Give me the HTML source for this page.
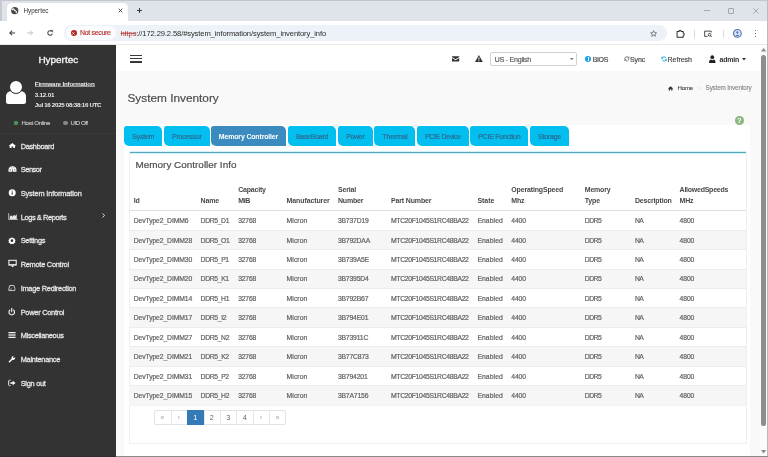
<!DOCTYPE html><html><head><meta charset="utf-8"><style>*{box-sizing:border-box;margin:0;padding:0}
html,body{width:768px;height:457px;overflow:hidden;background:#dfe3ea;font-family:"Liberation Sans",sans-serif;position:relative}
#W{position:absolute;left:0;top:0;width:768px;height:457px;will-change:transform}
.a{position:absolute}
.t{position:absolute;white-space:nowrap;line-height:1}
svg{position:absolute;overflow:visible}
#tabstrip{left:0;top:0;width:768px;height:21px;background:#dfe3ea;border-top:1.6px solid #c3c6cb}
#acttab{left:7px;top:3px;width:121px;height:18px;background:#fff;border-radius:5px 5px 0 0}
.flare{width:5px;height:5px;background:radial-gradient(circle at 0 0,transparent 4.6px,#fff 5px)}
.flare.r{background:radial-gradient(circle at 100% 0,transparent 4.6px,#fff 5px)}
#toolbar{left:0;top:20.8px;width:768px;height:24.2px;background:#fff;border-bottom:1px solid #e8e8e8}
#omni{left:64px;top:24.6px;width:603px;height:16.8px;border-radius:9px;background:#edf1f8}
#chip{left:66px;top:25.5px;width:50px;height:14px;border-radius:7px;background:#fbfcfe}
#side{left:0;top:45px;width:116px;height:412px;background:#333333}
#main{left:116px;top:45px;width:644px;height:412px;background:#f9f9f9}
#hdr{left:116px;top:45px;width:644px;height:26px;background:#fff}
#card{left:123.8px;top:125px;width:626px;height:332px;background:#fff}
.tab{position:absolute;top:125.5px;height:20.5px;background:#02bfef;border-radius:2.5px 5px 0 5px;color:#2a6f95;line-height:21.7px;text-align:center;white-space:nowrap}
.tab.act{background:#3a8cc0;color:#fff;font-weight:bold}
#uline{left:129.5px;top:151.7px;width:616.5px;height:1.3px;background:#56a8bb;box-shadow:0 0 1px 0.4px #a8e6f2}
#panel{left:128.6px;top:152px;width:618px;height:291.6px;border:1px solid #efefef;border-top:none}
.row{position:absolute;left:128.5px;width:617px;height:19.43px;border-top:1px solid #ececec}
.row.s{background:#f6f6f6}
.pg{position:absolute;top:409.5px;height:16px;border:1px solid #ddd;background:#fff;color:#337ab7;font-size:6px;line-height:14px;text-align:center}
.pg.act{background:#337ab7;border-color:#337ab7;color:#fff}
#sb{left:760px;top:45px;width:7px;height:412px;background:#fbfbfb}
#thumb{left:760.9px;top:55px;width:5.2px;height:371px;background:#8e8e8e;border-radius:2.6px}
</style></head><body><div id="W">
<div id="tabstrip" class="a"></div>
<div id="acttab" class="a"></div>
<div class="a" style="left:0;top:0;width:1.5px;height:45px;background:#c6c9ce"></div>
<svg style="left:11.4px;top:6.9px" width="7.5" height="7.3" viewBox="0 0 7.5 7.3"><circle cx="3.75" cy="3.65" r="3.6" fill="#464646"/><path d="M1.3 2.6Q2.2 1.3 3 2.4Q3.5 3.4 4.6 3.8Q5.5 4.2 5.3 5.6" stroke="#fff" stroke-width="1.15" fill="none" stroke-linecap="round"/></svg>
<div class="t" style="left:23.50px;top:8.00px;font-size:6.3px;color:#333;letter-spacing:-0.026px;">Hypertec</div>
<svg style="left:117.6px;top:8px" width="5" height="5" viewBox="0 0 10 10"><path d="M1.5 1.5L8.5 8.5M8.5 1.5L1.5 8.5" stroke="#333" stroke-width="1.8"/></svg>
<div class="a" style="left:136.8px;top:10px;width:5.2px;height:0.95px;background:#3c3c3c"></div><div class="a" style="left:138.95px;top:7.9px;width:0.95px;height:5.2px;background:#3c3c3c"></div>
<div class="a" style="left:704px;top:10.4px;width:6px;height:0.7px;background:#a3a6ab"></div>
<div class="a" style="left:728.3px;top:8.1px;width:5.6px;height:5.6px;border:0.8px solid #a3a6ab;border-radius:1px"></div>
<svg style="left:752.5px;top:8.1px" width="5.8" height="5.8" viewBox="0 0 10 10"><path d="M0.5 0.5L9.5 9.5M9.5 0.5L0.5 9.5" stroke="#8a8d92" stroke-width="1.2"/></svg>
<div id="toolbar" class="a"></div>
<svg style="left:9px;top:30.2px" width="6.4" height="5.8" viewBox="0 0 12 11"><path d="M11.5 5.5H1.5M6 1L1.5 5.5L6 10" stroke="#3c3c3c" stroke-width="1.9" fill="none"/></svg>
<svg style="left:27.4px;top:30.2px" width="6.4" height="5.8" viewBox="0 0 12 11"><path d="M0.5 5.5H10.5M6 1L10.5 5.5L6 10" stroke="#b8b8b8" stroke-width="1.7" fill="none"/></svg>
<svg style="left:47px;top:30px" width="6.2" height="6.2" viewBox="0 0 12 12"><path d="M10.3 6.8A4.4 4.4 0 1 1 8.8 2.4" stroke="#474747" stroke-width="2.1" fill="none"/><path d="M7 0.5H11V4.5Z" fill="#474747" stroke="#474747" stroke-width="0.8"/></svg>
<div id="omni" class="a"></div>
<div id="chip" class="a"></div>
<div class="a" style="left:70.6px;top:30.2px;width:6.2px;height:6.2px;border-radius:50%;background:#b3261e"></div>
<svg style="left:72.3px;top:31.9px" width="2.8" height="2.8" viewBox="0 0 10 10"><path d="M1 1L9 9M9 1L1 9" stroke="#fff" stroke-width="2.6"/></svg>
<div class="t" style="left:80.00px;top:29.00px;font-size:7.0px;color:#b3261e;letter-spacing:-0.315px;-webkit-text-stroke-width:0.1px;">Not secure</div>
<div class="t" style="left:120.5px;top:29.67px;font-size:7.6px;letter-spacing:-0.118px;color:#2a2a2a"><span style="color:#b0403a;text-decoration:line-through;text-decoration-thickness:0.5px;text-decoration-color:rgba(179,38,30,0.6)">https</span>://172.29.2.58/#system_information/system_inventory_info</div>
<svg style="left:649.8px;top:29.8px" width="7.2" height="7.2" viewBox="0 0 24 24"><path d="M12 2.5l2.9 6.3 6.9.7-5.2 4.6 1.5 6.8L12 17.4l-6.1 3.5 1.5-6.8L2.2 9.5l6.9-.7z" fill="none" stroke="#474747" stroke-width="2.2" stroke-linejoin="round"/></svg>
<svg style="left:675.6px;top:28.8px" width="9.6" height="9.2" viewBox="0 0 22 21"><path d="M2.5 5.5H7A2.4 2.4 0 0 1 11.8 5.5H16.5V9.8A2.4 2.4 0 0 1 16.5 14.6V19H2.5Z" fill="none" stroke="#2a2a2a" stroke-width="2.3" stroke-linejoin="round"/></svg>
<div class="a" style="left:694.3px;top:29.5px;width:0.7px;height:8px;background:#dadada"></div>
<svg style="left:703.8px;top:29.8px" width="8.5" height="7.5" viewBox="0 0 26 22"><path d="M2 3h20v4M2 3v16h9" fill="none" stroke="#1f1f1f" stroke-width="2.4"/><circle cx="17" cy="14" r="4" fill="none" stroke="#1f1f1f" stroke-width="2.4"/><path d="M20 17l4 4" stroke="#1f1f1f" stroke-width="2.4"/></svg>
<div class="a" style="left:722.5px;top:29.5px;width:0.7px;height:8px;background:#dadada"></div>
<svg style="left:732.5px;top:28.8px" width="8.8" height="8.8" viewBox="0 0 8.8 8.8"><circle cx="4.4" cy="4.4" r="3.85" fill="#dbe6fa" stroke="#4e6fa6" stroke-width="1.1"/><circle cx="4.4" cy="3.5" r="1.15" fill="#4a70b5"/><path d="M2.5 6.9Q4.4 4.6 6.3 6.9Z" fill="#4a70b5"/></svg>
<div class="a" style="left:754.9px;top:29.60px;width:1.6px;height:1.6px;border-radius:50%;background:#474747"></div>
<div class="a" style="left:754.9px;top:32.60px;width:1.6px;height:1.6px;border-radius:50%;background:#474747"></div>
<div class="a" style="left:754.9px;top:35.60px;width:1.6px;height:1.6px;border-radius:50%;background:#474747"></div>
<div id="side" class="a"></div>
<div class="t" style="left:38.40px;top:55.00px;font-size:9.95px;color:#f4f4f4;letter-spacing:-0.002px;-webkit-text-stroke-width:0.35px;">Hypertec</div>
<div class="a" style="left:5.5px;top:91.4px;width:20.3px;height:12.6px;border-radius:6px 6px 2.2px 2.2px / 5px 5px 2px 2px;background:#fff"></div>
<div class="a" style="left:10.05px;top:81.4px;width:11.9px;height:11.9px;border-radius:50%;background:#fff;box-shadow:0 0 0 0.9px #333"></div>
<div class="t" style="left:34.80px;top:81.00px;font-size:6.2px;color:#ececec;font-weight:bold;letter-spacing:-0.179px;">Firmware Information</div>
<div class="a" style="left:34.8px;top:86px;width:59.8px;height:0.7px;background:rgba(255,255,255,0.5)"></div>
<div class="t" style="left:34.80px;top:92.00px;font-size:6.2px;color:#ececec;font-weight:bold;letter-spacing:-0.184px;">3.12.01</div>
<div class="t" style="left:34.80px;top:102.00px;font-size:6.2px;color:#ececec;font-weight:bold;letter-spacing:-0.312px;">Jul 16 2025 08:38:16 UTC</div>
<div class="a" style="left:13.6px;top:120.5px;width:4.6px;height:4.6px;border-radius:50%;background:#52905a;box-shadow:0 0 0.6px 0.3px #3f6f45"></div>
<div class="t" style="left:21.50px;top:120.00px;font-size:6.2px;color:#c8c8c8;letter-spacing:-0.345px;-webkit-text-stroke-width:0.15px;">Host Online</div>
<div class="a" style="left:63.1px;top:120.5px;width:4.6px;height:4.6px;border-radius:50%;background:#888"></div>
<div class="t" style="left:70.60px;top:120.00px;font-size:6.2px;color:#c8c8c8;letter-spacing:-0.508px;-webkit-text-stroke-width:0.15px;">UID Off</div>
<div class="a" style="left:0;top:132.5px;width:116px;height:1px;background:#3a3a3a"></div>
<div class="t" style="left:20.70px;top:143.00px;font-size:7.4px;color:#e8e8e8;letter-spacing:-0.322px;-webkit-text-stroke-width:0.26px;">Dashboard</div>
<svg style="left:7.5px;top:141.80px" width="9" height="8" viewBox="0 0 18 16"><path d="M8.7 2.2L16 8H14V12.2H10.4V9.2H7V12.2H3.4V8H1.4Z" fill="#fff"/></svg>
<div class="t" style="left:20.70px;top:166.00px;font-size:7.4px;color:#e8e8e8;letter-spacing:-0.425px;-webkit-text-stroke-width:0.26px;">Sensor</div>
<svg style="left:7.5px;top:165.49px" width="9" height="8" viewBox="0 0 18 16"><path d="M1 13.3V10A8 7.6 0 0 1 17 10V13.3Z" fill="#fff"/><circle cx="4.3" cy="9.6" r="1.2" fill="#333"/><circle cx="13.7" cy="9.6" r="1.2" fill="#333"/><circle cx="6.2" cy="5.6" r="1" fill="#555"/><circle cx="11.8" cy="5.6" r="1" fill="#555"/><path d="M8 13.3L9 5.5L10 13.3Z" fill="#444"/></svg>
<div class="t" style="left:20.70px;top:190.00px;font-size:7.4px;color:#e8e8e8;letter-spacing:-0.153px;-webkit-text-stroke-width:0.26px;">System Information</div>
<svg style="left:7.5px;top:189.18px" width="9" height="8" viewBox="0 0 18 16"><circle cx="8.4" cy="7.3" r="7" fill="#fff"/><rect x="7.4" y="6.4" width="2" height="5" fill="#333"/><circle cx="8.4" cy="4.2" r="1.15" fill="#333"/></svg>
<div class="t" style="left:20.70px;top:214.00px;font-size:7.4px;color:#e8e8e8;letter-spacing:-0.379px;-webkit-text-stroke-width:0.26px;">Logs &amp; Reports</div>
<svg style="left:7.5px;top:212.87px" width="9" height="8" viewBox="0 0 18 16"><path d="M0.8 0.6H2.3V11.9H19.6V13.4H0.8Z" fill="#e8e4ea"/><path d="M3.6 11.9V7L6.5 4.5L9 7.5L12 3.5L14.5 6L17.5 2V11.9Z" fill="#e8e4ea"/></svg>
<div class="t" style="left:20.70px;top:237.00px;font-size:7.4px;color:#e8e8e8;letter-spacing:-0.280px;-webkit-text-stroke-width:0.26px;">Settings</div>
<svg style="left:7.5px;top:236.56px" width="9" height="8" viewBox="0 0 18 16"><path d="M7.9 0.2L9.6 2.4L12.4 1.9L12.9 4.7L15.3 6.2L13.9 8.7L14.8 11.4L12 12.1L10.9 14.6L7.9 13.4L4.9 14.6L3.8 12.1L1 11.4L1.9 8.7L0.5 6.2L2.9 4.7L3.4 1.9L6.2 2.4Z" fill="#fff"/><circle cx="7.9" cy="7.3" r="2.6" fill="#333"/></svg>
<div class="t" style="left:20.70px;top:261.00px;font-size:7.4px;color:#e8e8e8;letter-spacing:-0.259px;-webkit-text-stroke-width:0.26px;">Remote Control</div>
<svg style="left:7.5px;top:260.25px" width="9" height="8" viewBox="0 0 18 16"><path d="M0.8 -0.4H17.4V11.2H0.8Z" fill="#fff"/><path d="M2.8 1.6H15.4V8.4H2.8Z" fill="#333"/><path d="M5.6 11H12.6L9.1 14.6Z" fill="#fff"/></svg>
<div class="t" style="left:20.70px;top:285.00px;font-size:7.4px;color:#e8e8e8;letter-spacing:-0.262px;-webkit-text-stroke-width:0.26px;">Image Redirection</div>
<svg style="left:7.5px;top:283.94px" width="9" height="8" viewBox="0 0 18 16"><path d="M3.6 2.9H11.8L13.7 9V13.1H1.7V9Z" fill="none" stroke="#d6d6d6" stroke-width="1.8" stroke-linejoin="round"/><path d="M4.6 5H10.8V7.2H4.6Z" fill="#444"/><path d="M3.5 10.2H8" stroke="#d6d6d6" stroke-width="1.2"/></svg>
<div class="t" style="left:20.70px;top:309.00px;font-size:7.4px;color:#e8e8e8;letter-spacing:-0.253px;-webkit-text-stroke-width:0.26px;">Power Control</div>
<svg style="left:7.5px;top:307.63px" width="9" height="8" viewBox="0 0 18 16"><path d="M4.4 3.6A5.6 5.6 0 1 0 10.6 3.6" fill="none" stroke="#f2f2f2" stroke-width="2.2"/><path d="M7.5 0.8V7.6" stroke="#f2f2f2" stroke-width="2.2" stroke-linecap="round"/></svg>
<div class="t" style="left:20.70px;top:332.00px;font-size:7.4px;color:#e8e8e8;letter-spacing:-0.299px;-webkit-text-stroke-width:0.26px;">Miscellaneous</div>
<svg style="left:7.5px;top:331.32px" width="9" height="8" viewBox="0 0 18 16"><rect x="0.8" y="2" width="14.4" height="2.6" fill="#eee"/><rect x="0.8" y="6.7" width="14.4" height="2.6" fill="#eee"/><rect x="0.8" y="11.4" width="14.4" height="2.6" fill="#eee"/></svg>
<div class="t" style="left:20.70px;top:356.00px;font-size:7.4px;color:#e8e8e8;letter-spacing:-0.261px;-webkit-text-stroke-width:0.26px;">Maintenance</div>
<svg style="left:7.5px;top:355.01px" width="9" height="8" viewBox="0 0 18 16"><path d="M2.8 13.6L8.6 7.8" stroke="#fff" stroke-width="2.8" stroke-linecap="round"/><path d="M7.2 7.6A4.2 4.2 0 0 1 11.6 2L9.8 4.6L11.6 6.2L14.4 4.6A4.2 4.2 0 0 1 9.2 9.6Z" fill="#fff"/></svg>
<div class="t" style="left:20.70px;top:380.00px;font-size:7.4px;color:#e8e8e8;letter-spacing:-0.269px;-webkit-text-stroke-width:0.26px;">Sign out</div>
<svg style="left:7.5px;top:378.70px" width="9" height="8" viewBox="0 0 18 16"><path d="M5 2.6H2.8Q1.2 2.6 1.2 4.2V11.6Q1.2 13.2 2.8 13.2H5" fill="none" stroke="#e6e6e6" stroke-width="2"/><path d="M4.6 6.4H9.4V3.4L15 8L9.4 12.6V9.6H4.6Z" fill="#fff"/>
</svg>
<svg style="left:102.2px;top:212.6px" width="3.2" height="4.9" viewBox="0 0 6 10"><path d="M1.2 1L4.8 5L1.2 9" stroke="#e0e0e0" stroke-width="2" fill="none"/></svg>
<div id="main" class="a"></div>
<div id="hdr" class="a"></div>
<div class="a" style="left:129.8px;top:55.00px;width:12px;height:1.3px;background:#3a3a3a"></div>
<div class="a" style="left:129.8px;top:58.15px;width:12px;height:1.3px;background:#3a3a3a"></div>
<div class="a" style="left:129.8px;top:61.45px;width:12px;height:1.3px;background:#3a3a3a"></div>
<svg style="left:452px;top:56px" width="7.2" height="5.8" viewBox="0 0 16 12"><path d="M0 0H16V2L8 7L0 2Z" fill="#333"/><path d="M0 4L8 9L16 4V12H0Z" fill="#333"/></svg>
<svg style="left:474.8px;top:55px" width="7.8" height="7" viewBox="0 0 16 14"><path d="M8 0L16 14H0Z" fill="#333"/><path d="M6.8 4.8H9.2L8.8 9.6H7.2Z M7 10.6H9V12.4H7Z" fill="#fff"/></svg>
<div class="a" style="left:490.4px;top:51.6px;width:86.8px;height:14.3px;border:1px solid #d2d2d2;border-radius:2px;background:#fff"></div>
<div class="t" style="left:494.80px;top:56.00px;font-size:7.0px;color:#555;letter-spacing:-0.225px;-webkit-text-stroke-width:0.15px;">US - English</div>
<svg style="left:569.5px;top:57.8px" width="3.6" height="2.2" viewBox="0 0 6 3.6"><path d="M0 0H6L3 3.6Z" fill="#777"/></svg>
<div class="a" style="left:585.4px;top:55.9px;width:6px;height:6px;border-radius:50%;background:#1ba1e2"></div>
<div class="a" style="left:587.95px;top:58.3px;width:0.9px;height:2.4px;background:#fff"></div><div class="a" style="left:587.95px;top:56.9px;width:0.9px;height:0.9px;background:#fff"></div>
<div class="t" style="left:592.70px;top:56.00px;font-size:7.0px;color:#444;letter-spacing:-0.357px;-webkit-text-stroke-width:0.15px;">BIOS</div>
<svg style="left:623.6px;top:55.9px" width="5.6" height="5.6" viewBox="0 0 12 12"><path d="M1.6 6.5A4.4 4.4 0 0 1 9.4 3.2" stroke="#666" stroke-width="1.8" fill="none"/><path d="M10.4 5.5A4.4 4.4 0 0 1 2.6 8.8" stroke="#666" stroke-width="1.8" fill="none"/><path d="M11.2 0.6V5H6.8Z" fill="#666"/><path d="M0.8 11.4V7H5.2Z" fill="#666"/></svg>
<div class="t" style="left:630.00px;top:56.00px;font-size:7.0px;color:#444;letter-spacing:-0.141px;-webkit-text-stroke-width:0.15px;">Sync</div>
<svg style="left:660.8px;top:55.7px" width="6.2" height="5.9" viewBox="0 0 12 12"><path d="M10 4.6A4.6 4.6 0 0 0 2 3.6" stroke="#2aa6d8" stroke-width="2" fill="none"/><path d="M2 7.4A4.6 4.6 0 0 0 10 8.4" stroke="#2aa6d8" stroke-width="2" fill="none"/><path d="M0.4 0.6V5.4H5Z" fill="#2aa6d8"/><path d="M11.6 11.4V6.6H7Z" fill="#2aa6d8"/></svg>
<div class="t" style="left:667.50px;top:56.00px;font-size:7.0px;color:#444;letter-spacing:-0.002px;-webkit-text-stroke-width:0.15px;">Refresh</div>
<svg style="left:708.5px;top:54.8px" width="6.6" height="8.2" viewBox="0 0 12 14"><circle cx="6" cy="3.6" r="3.4" fill="#222"/><path d="M0 14C0 9 2 7.6 3.6 7.6L6 9L8.4 7.6C10 7.6 12 9 12 14Z" fill="#222"/></svg>
<div class="t" style="left:719.50px;top:56.00px;font-size:7.0px;color:#333;font-weight:bold;letter-spacing:-0.223px;">admin</div>
<svg style="left:742.2px;top:58.2px" width="4" height="2.4" viewBox="0 0 6 3.6"><path d="M0 0H6L3 3.6Z" fill="#333"/></svg>
<div class="t" style="left:127.50px;top:93.00px;font-size:11.8px;color:#4d4d4d;letter-spacing:0.006px;-webkit-text-stroke-width:0.2px;">System Inventory</div>
<svg style="left:668px;top:85.6px" width="5.2" height="4.6" viewBox="0 0 12 10"><path d="M6 0L12 5.2H10.4V10H7.4V7H4.6V10H1.6V5.2H0Z" fill="#333"/></svg>
<div class="t" style="left:677.60px;top:85.00px;font-size:6.2px;color:#444;letter-spacing:-0.285px;-webkit-text-stroke-width:0.1px;">Home</div>
<div class="t" style="left:697.60px;top:86.00px;font-size:5.5px;color:#dadada;">&gt;</div>
<div class="t" style="left:705.60px;top:85.00px;font-size:6.3px;color:#858585;letter-spacing:-0.167px;-webkit-text-stroke-width:0.1px;">System Inventory</div>
<div class="a" style="left:735.1px;top:116.3px;width:8.6px;height:8.6px;border-radius:50%;background:#8cb981"></div>
<div class="t" style="left:737.2px;top:117.2px;font-size:7px;color:#fff;font-weight:bold">?</div>
<div id="card" class="a"></div>
<div class="tab" style="left:124.2px;width:38.00px"></div>
<div class="t" style="left:132.25px;top:133.00px;font-size:7.0px;color:#2b6c93;letter-spacing:-0.240px;-webkit-text-stroke-width:0.2px;">System</div>
<div class="tab" style="left:164px;width:45.70px"></div>
<div class="t" style="left:172.05px;top:133.00px;font-size:7.0px;color:#2b6c93;letter-spacing:-0.212px;-webkit-text-stroke-width:0.2px;">Processor</div>
<div class="tab act" style="left:210.9px;width:75.10px"></div>
<div class="t" style="left:218.80px;top:133.00px;font-size:7.0px;color:#ffffff;font-weight:bold;letter-spacing:-0.172px;">Memory Controller</div>
<div class="tab" style="left:287.7px;width:48.55px"></div>
<div class="t" style="left:295.88px;top:133.00px;font-size:7.0px;color:#2b6c93;letter-spacing:-0.271px;-webkit-text-stroke-width:0.2px;">BaseBoard</div>
<div class="tab" style="left:337.9px;width:34.80px"></div>
<div class="t" style="left:346.20px;top:133.00px;font-size:7.0px;color:#2b6c93;letter-spacing:-0.328px;-webkit-text-stroke-width:0.2px;">Power</div>
<div class="tab" style="left:374.2px;width:41.20px"></div>
<div class="t" style="left:382.20px;top:133.00px;font-size:7.0px;color:#2b6c93;letter-spacing:-0.068px;-webkit-text-stroke-width:0.2px;">Thermal</div>
<div class="tab" style="left:417px;width:51.60px"></div>
<div class="t" style="left:424.90px;top:133.00px;font-size:7.0px;color:#2b6c93;letter-spacing:-0.353px;-webkit-text-stroke-width:0.2px;">PCIE Device</div>
<div class="tab" style="left:470.2px;width:58.10px"></div>
<div class="t" style="left:478.20px;top:133.00px;font-size:7.0px;color:#2b6c93;letter-spacing:-0.233px;-webkit-text-stroke-width:0.2px;">PCIE Function</div>
<div class="tab" style="left:530px;width:38.90px"></div>
<div class="t" style="left:538.00px;top:133.00px;font-size:7.0px;color:#2b6c93;letter-spacing:-0.231px;-webkit-text-stroke-width:0.2px;">Storage</div>
<div id="uline" class="a"></div>
<div id="panel" class="a"></div>
<div class="t" style="left:135.50px;top:160.00px;font-size:9.93px;color:#4e4e4e;letter-spacing:0.001px;-webkit-text-stroke-width:0.2px;">Memory Controller Info</div>
<div class="t" style="left:133.80px;top:197.00px;font-size:7.0px;color:#484848;font-weight:bold;letter-spacing:-0.261px;">Id</div>
<div class="t" style="left:200.60px;top:197.00px;font-size:7.0px;color:#484848;font-weight:bold;letter-spacing:-0.142px;">Name</div>
<div class="t" style="left:238.20px;top:186.00px;font-size:7.0px;color:#484848;font-weight:bold;letter-spacing:-0.210px;">Capacity</div>
<div class="t" style="left:238.20px;top:197.00px;font-size:7.0px;color:#484848;font-weight:bold;letter-spacing:-0.311px;">MiB</div>
<div class="t" style="left:286.60px;top:197.00px;font-size:7.0px;color:#484848;font-weight:bold;letter-spacing:-0.112px;">Manufacturer</div>
<div class="t" style="left:337.90px;top:186.00px;font-size:7.0px;color:#484848;font-weight:bold;letter-spacing:-0.145px;">Serial</div>
<div class="t" style="left:337.90px;top:197.00px;font-size:7.0px;color:#484848;font-weight:bold;letter-spacing:-0.158px;">Number</div>
<div class="t" style="left:391.00px;top:197.00px;font-size:7.0px;color:#484848;font-weight:bold;letter-spacing:-0.146px;">Part Number</div>
<div class="t" style="left:477.40px;top:197.00px;font-size:7.0px;color:#484848;font-weight:bold;letter-spacing:-0.023px;">State</div>
<div class="t" style="left:511.30px;top:186.00px;font-size:7.0px;color:#484848;font-weight:bold;letter-spacing:-0.162px;">OperatingSpeed</div>
<div class="t" style="left:511.30px;top:197.00px;font-size:7.0px;color:#484848;font-weight:bold;letter-spacing:-0.227px;">Mhz</div>
<div class="t" style="left:584.80px;top:186.00px;font-size:7.0px;color:#484848;font-weight:bold;letter-spacing:-0.207px;">Memory</div>
<div class="t" style="left:584.80px;top:197.00px;font-size:7.0px;color:#484848;font-weight:bold;letter-spacing:-0.198px;">Type</div>
<div class="t" style="left:634.90px;top:197.00px;font-size:7.0px;color:#484848;font-weight:bold;letter-spacing:-0.155px;">Description</div>
<div class="t" style="left:679.60px;top:186.00px;font-size:7.0px;color:#484848;font-weight:bold;letter-spacing:-0.249px;">AllowedSpeeds</div>
<div class="t" style="left:679.60px;top:197.00px;font-size:7.0px;color:#484848;font-weight:bold;letter-spacing:-0.240px;">MHz</div>
<div class="row" style="top:210.30px;border-top-color:#dedede"></div>
<div class="t" style="left:133.80px;top:218.00px;font-size:6.8px;color:#626262;letter-spacing:-0.121px;-webkit-text-stroke-width:0.2px;">DevType2_DIMM6</div>
<div class="t" style="left:200.60px;top:218.00px;font-size:6.8px;color:#626262;letter-spacing:-0.354px;-webkit-text-stroke-width:0.2px;">DDR5_D1</div>
<div class="t" style="left:238.20px;top:218.00px;font-size:6.8px;color:#626262;letter-spacing:-0.189px;-webkit-text-stroke-width:0.2px;">32768</div>
<div class="t" style="left:286.60px;top:218.00px;font-size:6.8px;color:#626262;letter-spacing:0.068px;-webkit-text-stroke-width:0.2px;">Micron</div>
<div class="t" style="left:337.90px;top:218.00px;font-size:6.8px;color:#626262;letter-spacing:-0.177px;-webkit-text-stroke-width:0.2px;">3B737D19</div>
<div class="t" style="left:391.00px;top:218.00px;font-size:6.8px;color:#626262;letter-spacing:-0.315px;-webkit-text-stroke-width:0.2px;">MTC20F1045S1RC48BA22</div>
<div class="t" style="left:477.40px;top:218.00px;font-size:6.8px;color:#626262;letter-spacing:0.071px;-webkit-text-stroke-width:0.2px;">Enabled</div>
<div class="t" style="left:511.30px;top:218.00px;font-size:6.8px;color:#626262;letter-spacing:-0.132px;-webkit-text-stroke-width:0.2px;">4400</div>
<div class="t" style="left:584.80px;top:218.00px;font-size:6.8px;color:#626262;letter-spacing:-0.528px;-webkit-text-stroke-width:0.2px;">DDR5</div>
<div class="t" style="left:634.90px;top:218.00px;font-size:6.8px;color:#626262;letter-spacing:-0.520px;-webkit-text-stroke-width:0.2px;">NA</div>
<div class="t" style="left:679.60px;top:218.00px;font-size:6.8px;color:#626262;letter-spacing:-0.132px;-webkit-text-stroke-width:0.2px;">4800</div>
<div class="row s" style="top:229.73px"></div>
<div class="t" style="left:133.80px;top:238.00px;font-size:6.8px;color:#626262;letter-spacing:-0.120px;-webkit-text-stroke-width:0.2px;">DevType2_DIMM28</div>
<div class="t" style="left:200.60px;top:238.00px;font-size:6.8px;color:#626262;letter-spacing:-0.358px;-webkit-text-stroke-width:0.2px;">DDR5_O1</div>
<div class="t" style="left:238.20px;top:238.00px;font-size:6.8px;color:#626262;letter-spacing:-0.189px;-webkit-text-stroke-width:0.2px;">32768</div>
<div class="t" style="left:286.60px;top:238.00px;font-size:6.8px;color:#626262;letter-spacing:0.068px;-webkit-text-stroke-width:0.2px;">Micron</div>
<div class="t" style="left:337.90px;top:238.00px;font-size:6.8px;color:#626262;letter-spacing:-0.185px;-webkit-text-stroke-width:0.2px;">3B792DAA</div>
<div class="t" style="left:391.00px;top:238.00px;font-size:6.8px;color:#626262;letter-spacing:-0.315px;-webkit-text-stroke-width:0.2px;">MTC20F1045S1RC48BA22</div>
<div class="t" style="left:477.40px;top:238.00px;font-size:6.8px;color:#626262;letter-spacing:0.071px;-webkit-text-stroke-width:0.2px;">Enabled</div>
<div class="t" style="left:511.30px;top:238.00px;font-size:6.8px;color:#626262;letter-spacing:-0.132px;-webkit-text-stroke-width:0.2px;">4400</div>
<div class="t" style="left:584.80px;top:238.00px;font-size:6.8px;color:#626262;letter-spacing:-0.528px;-webkit-text-stroke-width:0.2px;">DDR5</div>
<div class="t" style="left:634.90px;top:238.00px;font-size:6.8px;color:#626262;letter-spacing:-0.520px;-webkit-text-stroke-width:0.2px;">NA</div>
<div class="t" style="left:679.60px;top:238.00px;font-size:6.8px;color:#626262;letter-spacing:-0.132px;-webkit-text-stroke-width:0.2px;">4800</div>
<div class="row" style="top:249.16px"></div>
<div class="t" style="left:133.80px;top:257.00px;font-size:6.8px;color:#626262;letter-spacing:-0.120px;-webkit-text-stroke-width:0.2px;">DevType2_DIMM30</div>
<div class="t" style="left:200.60px;top:257.00px;font-size:6.8px;color:#626262;letter-spacing:-0.350px;-webkit-text-stroke-width:0.2px;">DDR5_P1</div>
<div class="t" style="left:238.20px;top:257.00px;font-size:6.8px;color:#626262;letter-spacing:-0.189px;-webkit-text-stroke-width:0.2px;">32768</div>
<div class="t" style="left:286.60px;top:257.00px;font-size:6.8px;color:#626262;letter-spacing:0.068px;-webkit-text-stroke-width:0.2px;">Micron</div>
<div class="t" style="left:337.90px;top:257.00px;font-size:6.8px;color:#626262;letter-spacing:-0.179px;-webkit-text-stroke-width:0.2px;">3B739A5E</div>
<div class="t" style="left:391.00px;top:257.00px;font-size:6.8px;color:#626262;letter-spacing:-0.315px;-webkit-text-stroke-width:0.2px;">MTC20F1045S1RC48BA22</div>
<div class="t" style="left:477.40px;top:257.00px;font-size:6.8px;color:#626262;letter-spacing:0.071px;-webkit-text-stroke-width:0.2px;">Enabled</div>
<div class="t" style="left:511.30px;top:257.00px;font-size:6.8px;color:#626262;letter-spacing:-0.132px;-webkit-text-stroke-width:0.2px;">4400</div>
<div class="t" style="left:584.80px;top:257.00px;font-size:6.8px;color:#626262;letter-spacing:-0.528px;-webkit-text-stroke-width:0.2px;">DDR5</div>
<div class="t" style="left:634.90px;top:257.00px;font-size:6.8px;color:#626262;letter-spacing:-0.520px;-webkit-text-stroke-width:0.2px;">NA</div>
<div class="t" style="left:679.60px;top:257.00px;font-size:6.8px;color:#626262;letter-spacing:-0.132px;-webkit-text-stroke-width:0.2px;">4800</div>
<div class="row s" style="top:268.59px"></div>
<div class="t" style="left:133.80px;top:276.00px;font-size:6.8px;color:#626262;letter-spacing:-0.120px;-webkit-text-stroke-width:0.2px;">DevType2_DIMM20</div>
<div class="t" style="left:200.60px;top:276.00px;font-size:6.8px;color:#626262;letter-spacing:-0.350px;-webkit-text-stroke-width:0.2px;">DDR5_K1</div>
<div class="t" style="left:238.20px;top:276.00px;font-size:6.8px;color:#626262;letter-spacing:-0.189px;-webkit-text-stroke-width:0.2px;">32768</div>
<div class="t" style="left:286.60px;top:276.00px;font-size:6.8px;color:#626262;letter-spacing:0.068px;-webkit-text-stroke-width:0.2px;">Micron</div>
<div class="t" style="left:337.90px;top:276.00px;font-size:6.8px;color:#626262;letter-spacing:-0.177px;-webkit-text-stroke-width:0.2px;">3B7395D4</div>
<div class="t" style="left:391.00px;top:276.00px;font-size:6.8px;color:#626262;letter-spacing:-0.315px;-webkit-text-stroke-width:0.2px;">MTC20F1045S1RC48BA22</div>
<div class="t" style="left:477.40px;top:276.00px;font-size:6.8px;color:#626262;letter-spacing:0.071px;-webkit-text-stroke-width:0.2px;">Enabled</div>
<div class="t" style="left:511.30px;top:276.00px;font-size:6.8px;color:#626262;letter-spacing:-0.132px;-webkit-text-stroke-width:0.2px;">4400</div>
<div class="t" style="left:584.80px;top:276.00px;font-size:6.8px;color:#626262;letter-spacing:-0.528px;-webkit-text-stroke-width:0.2px;">DDR5</div>
<div class="t" style="left:634.90px;top:276.00px;font-size:6.8px;color:#626262;letter-spacing:-0.520px;-webkit-text-stroke-width:0.2px;">NA</div>
<div class="t" style="left:679.60px;top:276.00px;font-size:6.8px;color:#626262;letter-spacing:-0.132px;-webkit-text-stroke-width:0.2px;">4800</div>
<div class="row" style="top:288.02px"></div>
<div class="t" style="left:133.80px;top:296.00px;font-size:6.8px;color:#626262;letter-spacing:-0.120px;-webkit-text-stroke-width:0.2px;">DevType2_DIMM14</div>
<div class="t" style="left:200.60px;top:296.00px;font-size:6.8px;color:#626262;letter-spacing:-0.354px;-webkit-text-stroke-width:0.2px;">DDR5_H1</div>
<div class="t" style="left:238.20px;top:296.00px;font-size:6.8px;color:#626262;letter-spacing:-0.189px;-webkit-text-stroke-width:0.2px;">32768</div>
<div class="t" style="left:286.60px;top:296.00px;font-size:6.8px;color:#626262;letter-spacing:0.068px;-webkit-text-stroke-width:0.2px;">Micron</div>
<div class="t" style="left:337.90px;top:296.00px;font-size:6.8px;color:#626262;letter-spacing:-0.175px;-webkit-text-stroke-width:0.2px;">3B792B67</div>
<div class="t" style="left:391.00px;top:296.00px;font-size:6.8px;color:#626262;letter-spacing:-0.315px;-webkit-text-stroke-width:0.2px;">MTC20F1045S1RC48BA22</div>
<div class="t" style="left:477.40px;top:296.00px;font-size:6.8px;color:#626262;letter-spacing:0.071px;-webkit-text-stroke-width:0.2px;">Enabled</div>
<div class="t" style="left:511.30px;top:296.00px;font-size:6.8px;color:#626262;letter-spacing:-0.132px;-webkit-text-stroke-width:0.2px;">4400</div>
<div class="t" style="left:584.80px;top:296.00px;font-size:6.8px;color:#626262;letter-spacing:-0.528px;-webkit-text-stroke-width:0.2px;">DDR5</div>
<div class="t" style="left:634.90px;top:296.00px;font-size:6.8px;color:#626262;letter-spacing:-0.520px;-webkit-text-stroke-width:0.2px;">NA</div>
<div class="t" style="left:679.60px;top:296.00px;font-size:6.8px;color:#626262;letter-spacing:-0.132px;-webkit-text-stroke-width:0.2px;">4800</div>
<div class="row s" style="top:307.45px"></div>
<div class="t" style="left:133.80px;top:315.00px;font-size:6.8px;color:#626262;letter-spacing:-0.120px;-webkit-text-stroke-width:0.2px;">DevType2_DIMM17</div>
<div class="t" style="left:200.60px;top:315.00px;font-size:6.8px;color:#626262;letter-spacing:-0.320px;-webkit-text-stroke-width:0.2px;">DDR5_I2</div>
<div class="t" style="left:238.20px;top:315.00px;font-size:6.8px;color:#626262;letter-spacing:-0.189px;-webkit-text-stroke-width:0.2px;">32768</div>
<div class="t" style="left:286.60px;top:315.00px;font-size:6.8px;color:#626262;letter-spacing:0.068px;-webkit-text-stroke-width:0.2px;">Micron</div>
<div class="t" style="left:337.90px;top:315.00px;font-size:6.8px;color:#626262;letter-spacing:-0.175px;-webkit-text-stroke-width:0.2px;">3B794E01</div>
<div class="t" style="left:391.00px;top:315.00px;font-size:6.8px;color:#626262;letter-spacing:-0.315px;-webkit-text-stroke-width:0.2px;">MTC20F1045S1RC48BA22</div>
<div class="t" style="left:477.40px;top:315.00px;font-size:6.8px;color:#626262;letter-spacing:0.071px;-webkit-text-stroke-width:0.2px;">Enabled</div>
<div class="t" style="left:511.30px;top:315.00px;font-size:6.8px;color:#626262;letter-spacing:-0.132px;-webkit-text-stroke-width:0.2px;">4400</div>
<div class="t" style="left:584.80px;top:315.00px;font-size:6.8px;color:#626262;letter-spacing:-0.528px;-webkit-text-stroke-width:0.2px;">DDR5</div>
<div class="t" style="left:634.90px;top:315.00px;font-size:6.8px;color:#626262;letter-spacing:-0.520px;-webkit-text-stroke-width:0.2px;">NA</div>
<div class="t" style="left:679.60px;top:315.00px;font-size:6.8px;color:#626262;letter-spacing:-0.132px;-webkit-text-stroke-width:0.2px;">4800</div>
<div class="row" style="top:326.88px"></div>
<div class="t" style="left:133.80px;top:335.00px;font-size:6.8px;color:#626262;letter-spacing:-0.120px;-webkit-text-stroke-width:0.2px;">DevType2_DIMM27</div>
<div class="t" style="left:200.60px;top:335.00px;font-size:6.8px;color:#626262;letter-spacing:-0.354px;-webkit-text-stroke-width:0.2px;">DDR5_N2</div>
<div class="t" style="left:238.20px;top:335.00px;font-size:6.8px;color:#626262;letter-spacing:-0.189px;-webkit-text-stroke-width:0.2px;">32768</div>
<div class="t" style="left:286.60px;top:335.00px;font-size:6.8px;color:#626262;letter-spacing:0.068px;-webkit-text-stroke-width:0.2px;">Micron</div>
<div class="t" style="left:337.90px;top:335.00px;font-size:6.8px;color:#626262;letter-spacing:-0.174px;-webkit-text-stroke-width:0.2px;">3B73911C</div>
<div class="t" style="left:391.00px;top:335.00px;font-size:6.8px;color:#626262;letter-spacing:-0.315px;-webkit-text-stroke-width:0.2px;">MTC20F1045S1RC48BA22</div>
<div class="t" style="left:477.40px;top:335.00px;font-size:6.8px;color:#626262;letter-spacing:0.071px;-webkit-text-stroke-width:0.2px;">Enabled</div>
<div class="t" style="left:511.30px;top:335.00px;font-size:6.8px;color:#626262;letter-spacing:-0.132px;-webkit-text-stroke-width:0.2px;">4400</div>
<div class="t" style="left:584.80px;top:335.00px;font-size:6.8px;color:#626262;letter-spacing:-0.528px;-webkit-text-stroke-width:0.2px;">DDR5</div>
<div class="t" style="left:634.90px;top:335.00px;font-size:6.8px;color:#626262;letter-spacing:-0.520px;-webkit-text-stroke-width:0.2px;">NA</div>
<div class="t" style="left:679.60px;top:335.00px;font-size:6.8px;color:#626262;letter-spacing:-0.132px;-webkit-text-stroke-width:0.2px;">4800</div>
<div class="row s" style="top:346.31px"></div>
<div class="t" style="left:133.80px;top:354.00px;font-size:6.8px;color:#626262;letter-spacing:-0.120px;-webkit-text-stroke-width:0.2px;">DevType2_DIMM21</div>
<div class="t" style="left:200.60px;top:354.00px;font-size:6.8px;color:#626262;letter-spacing:-0.350px;-webkit-text-stroke-width:0.2px;">DDR5_K2</div>
<div class="t" style="left:238.20px;top:354.00px;font-size:6.8px;color:#626262;letter-spacing:-0.189px;-webkit-text-stroke-width:0.2px;">32768</div>
<div class="t" style="left:286.60px;top:354.00px;font-size:6.8px;color:#626262;letter-spacing:0.068px;-webkit-text-stroke-width:0.2px;">Micron</div>
<div class="t" style="left:337.90px;top:354.00px;font-size:6.8px;color:#626262;letter-spacing:-0.177px;-webkit-text-stroke-width:0.2px;">3B77C873</div>
<div class="t" style="left:391.00px;top:354.00px;font-size:6.8px;color:#626262;letter-spacing:-0.315px;-webkit-text-stroke-width:0.2px;">MTC20F1045S1RC48BA22</div>
<div class="t" style="left:477.40px;top:354.00px;font-size:6.8px;color:#626262;letter-spacing:0.071px;-webkit-text-stroke-width:0.2px;">Enabled</div>
<div class="t" style="left:511.30px;top:354.00px;font-size:6.8px;color:#626262;letter-spacing:-0.132px;-webkit-text-stroke-width:0.2px;">4400</div>
<div class="t" style="left:584.80px;top:354.00px;font-size:6.8px;color:#626262;letter-spacing:-0.528px;-webkit-text-stroke-width:0.2px;">DDR5</div>
<div class="t" style="left:634.90px;top:354.00px;font-size:6.8px;color:#626262;letter-spacing:-0.520px;-webkit-text-stroke-width:0.2px;">NA</div>
<div class="t" style="left:679.60px;top:354.00px;font-size:6.8px;color:#626262;letter-spacing:-0.132px;-webkit-text-stroke-width:0.2px;">4800</div>
<div class="row" style="top:365.74px"></div>
<div class="t" style="left:133.80px;top:374.00px;font-size:6.8px;color:#626262;letter-spacing:-0.120px;-webkit-text-stroke-width:0.2px;">DevType2_DIMM31</div>
<div class="t" style="left:200.60px;top:374.00px;font-size:6.8px;color:#626262;letter-spacing:-0.350px;-webkit-text-stroke-width:0.2px;">DDR5_P2</div>
<div class="t" style="left:238.20px;top:374.00px;font-size:6.8px;color:#626262;letter-spacing:-0.189px;-webkit-text-stroke-width:0.2px;">32768</div>
<div class="t" style="left:286.60px;top:374.00px;font-size:6.8px;color:#626262;letter-spacing:0.068px;-webkit-text-stroke-width:0.2px;">Micron</div>
<div class="t" style="left:337.90px;top:374.00px;font-size:6.8px;color:#626262;letter-spacing:-0.171px;-webkit-text-stroke-width:0.2px;">3B794201</div>
<div class="t" style="left:391.00px;top:374.00px;font-size:6.8px;color:#626262;letter-spacing:-0.315px;-webkit-text-stroke-width:0.2px;">MTC20F1045S1RC48BA22</div>
<div class="t" style="left:477.40px;top:374.00px;font-size:6.8px;color:#626262;letter-spacing:0.071px;-webkit-text-stroke-width:0.2px;">Enabled</div>
<div class="t" style="left:511.30px;top:374.00px;font-size:6.8px;color:#626262;letter-spacing:-0.132px;-webkit-text-stroke-width:0.2px;">4400</div>
<div class="t" style="left:584.80px;top:374.00px;font-size:6.8px;color:#626262;letter-spacing:-0.528px;-webkit-text-stroke-width:0.2px;">DDR5</div>
<div class="t" style="left:634.90px;top:374.00px;font-size:6.8px;color:#626262;letter-spacing:-0.520px;-webkit-text-stroke-width:0.2px;">NA</div>
<div class="t" style="left:679.60px;top:374.00px;font-size:6.8px;color:#626262;letter-spacing:-0.132px;-webkit-text-stroke-width:0.2px;">4800</div>
<div class="row s" style="top:385.17px"></div>
<div class="t" style="left:133.80px;top:393.00px;font-size:6.8px;color:#626262;letter-spacing:-0.120px;-webkit-text-stroke-width:0.2px;">DevType2_DIMM15</div>
<div class="t" style="left:200.60px;top:393.00px;font-size:6.8px;color:#626262;letter-spacing:-0.354px;-webkit-text-stroke-width:0.2px;">DDR5_H2</div>
<div class="t" style="left:238.20px;top:393.00px;font-size:6.8px;color:#626262;letter-spacing:-0.189px;-webkit-text-stroke-width:0.2px;">32768</div>
<div class="t" style="left:286.60px;top:393.00px;font-size:6.8px;color:#626262;letter-spacing:0.068px;-webkit-text-stroke-width:0.2px;">Micron</div>
<div class="t" style="left:337.90px;top:393.00px;font-size:6.8px;color:#626262;letter-spacing:-0.175px;-webkit-text-stroke-width:0.2px;">3B7A7156</div>
<div class="t" style="left:391.00px;top:393.00px;font-size:6.8px;color:#626262;letter-spacing:-0.315px;-webkit-text-stroke-width:0.2px;">MTC20F1045S1RC48BA22</div>
<div class="t" style="left:477.40px;top:393.00px;font-size:6.8px;color:#626262;letter-spacing:0.071px;-webkit-text-stroke-width:0.2px;">Enabled</div>
<div class="t" style="left:511.30px;top:393.00px;font-size:6.8px;color:#626262;letter-spacing:-0.132px;-webkit-text-stroke-width:0.2px;">4400</div>
<div class="t" style="left:584.80px;top:393.00px;font-size:6.8px;color:#626262;letter-spacing:-0.528px;-webkit-text-stroke-width:0.2px;">DDR5</div>
<div class="t" style="left:634.90px;top:393.00px;font-size:6.8px;color:#626262;letter-spacing:-0.520px;-webkit-text-stroke-width:0.2px;">NA</div>
<div class="t" style="left:679.60px;top:393.00px;font-size:6.8px;color:#626262;letter-spacing:-0.132px;-webkit-text-stroke-width:0.2px;">4800</div>
<div class="a" style="left:129.5px;top:404.60px;width:617px;height:1px;background:#f2f2f2"></div>
<div class="a" style="left:154.2px;top:409.6px;width:131.60px;height:15.2px;border:1px solid #e3e3e3;border-radius:2px;background:#fff"></div>
<div class="t" style="left:154.20px;top:415.00px;width:16.45px;text-align:center;font-size:6.5px;color:#999">&laquo;</div>
<div class="a" style="left:170.65px;top:409.6px;width:0.8px;height:15.2px;background:#e6e6e6"></div>
<div class="t" style="left:170.65px;top:415.00px;width:16.45px;text-align:center;font-size:6.5px;color:#999">&lsaquo;</div>
<div class="a" style="left:187.10px;top:409.6px;width:0.8px;height:15.2px;background:#e6e6e6"></div>
<div class="a" style="left:187.10px;top:409.6px;width:16.45px;height:15.2px;background:#337ab7"></div>
<div class="t" style="left:187.10px;top:414.32px;width:16.45px;text-align:center;font-size:7.3px;color:#fff">1</div>
<div class="a" style="left:203.55px;top:409.6px;width:0.8px;height:15.2px;background:#e6e6e6"></div>
<div class="t" style="left:203.55px;top:414.32px;width:16.45px;text-align:center;font-size:7.3px;color:#666">2</div>
<div class="a" style="left:220.00px;top:409.6px;width:0.8px;height:15.2px;background:#e6e6e6"></div>
<div class="t" style="left:220.00px;top:414.32px;width:16.45px;text-align:center;font-size:7.3px;color:#666">3</div>
<div class="a" style="left:236.45px;top:409.6px;width:0.8px;height:15.2px;background:#e6e6e6"></div>
<div class="t" style="left:236.45px;top:414.32px;width:16.45px;text-align:center;font-size:7.3px;color:#666">4</div>
<div class="a" style="left:252.90px;top:409.6px;width:0.8px;height:15.2px;background:#e6e6e6"></div>
<div class="t" style="left:252.90px;top:415.00px;width:16.45px;text-align:center;font-size:6.5px;color:#999">&rsaquo;</div>
<div class="a" style="left:269.35px;top:409.6px;width:0.8px;height:15.2px;background:#e6e6e6"></div>
<div class="t" style="left:269.35px;top:415.00px;width:16.45px;text-align:center;font-size:6.5px;color:#999">&raquo;</div>
<div id="sb" class="a"></div>
<div id="thumb" class="a"></div>
<svg style="left:760.9px;top:48.1px" width="5.2" height="3.6" viewBox="0 0 6 4"><path d="M0 4H6L3 0Z" fill="#8a8a8a"/></svg>
<svg style="left:760.9px;top:450px" width="5.2" height="3.6" viewBox="0 0 6 4"><path d="M0 0H6L3 4Z" fill="#8a8a8a"/></svg>
<div class="a" style="left:767px;top:0;width:1px;height:457px;background:#b8babd"></div>
<div class="a" style="left:116px;top:456px;width:652px;height:1px;background:#8a8a8a"></div><div class="a" style="left:0;top:456px;width:116px;height:1px;background:#2f2c31"></div>
</div></body></html>
